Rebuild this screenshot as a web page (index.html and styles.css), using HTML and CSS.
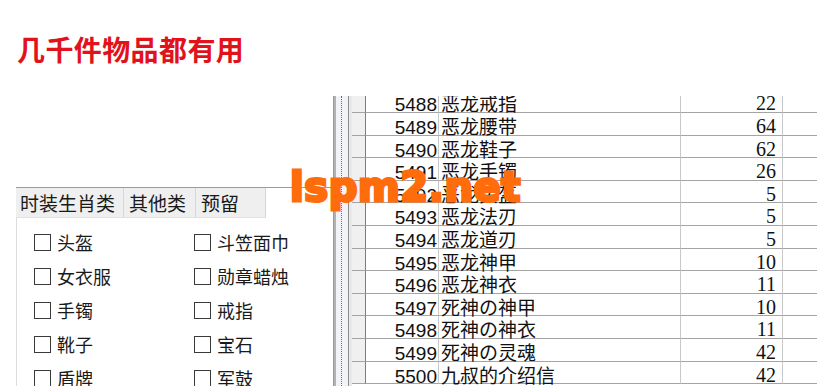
FILE: index.html
```html
<!DOCTYPE html>
<html lang="zh-CN">
<head>
<meta charset="utf-8">
<title>几千件物品都有用</title>
<link rel="stylesheet" href="styles.css">
</head>
<body>
<div class="page">
  <header class="head">
    <h1 class="title">几千件物品都有用</h1>
  </header>
  <div class="main">
    <section class="left">
      <div class="tabstrip">
        <span class="tab t1">时装生肖类</span>
        <span class="tab t2">其他类</span>
        <span class="tab t3">预留</span>
      </div>
      <div class="checks">
        <label class="chk"><span class="box"></span>头盔</label>
        <label class="chk"><span class="box"></span>斗笠面巾</label>
        <label class="chk"><span class="box"></span>女衣服</label>
        <label class="chk"><span class="box"></span>勋章蜡烛</label>
        <label class="chk"><span class="box"></span>手镯</label>
        <label class="chk"><span class="box"></span>戒指</label>
        <label class="chk"><span class="box"></span>靴子</label>
        <label class="chk"><span class="box"></span>宝石</label>
        <label class="chk"><span class="box"></span>盾牌</label>
        <label class="chk"><span class="box"></span>军鼓</label>
      </div>
    </section>
    <div class="splitter">
      <div class="bar"></div>
      <div class="grip"></div>
      <div class="edge"></div>
    </div>
    <div class="grid">
      <div class="rows">
        <div class="row"><span class="rh"></span><span class="id">5488</span><span class="name">恶龙戒指</span><span class="qty">22</span><span class="rest"></span></div>
        <div class="row"><span class="rh"></span><span class="id">5489</span><span class="name">恶龙腰带</span><span class="qty">64</span><span class="rest"></span></div>
        <div class="row"><span class="rh"></span><span class="id">5490</span><span class="name">恶龙鞋子</span><span class="qty">62</span><span class="rest"></span></div>
        <div class="row"><span class="rh"></span><span class="id">5491</span><span class="name">恶龙手镯</span><span class="qty">26</span><span class="rest"></span></div>
        <div class="row"><span class="rh"></span><span class="id">5492</span><span class="name">恶龙头盔</span><span class="qty">5</span><span class="rest"></span></div>
        <div class="row"><span class="rh"></span><span class="id">5493</span><span class="name">恶龙法刃</span><span class="qty">5</span><span class="rest"></span></div>
        <div class="row"><span class="rh"></span><span class="id">5494</span><span class="name">恶龙道刃</span><span class="qty">5</span><span class="rest"></span></div>
        <div class="row"><span class="rh"></span><span class="id">5495</span><span class="name">恶龙神甲</span><span class="qty">10</span><span class="rest"></span></div>
        <div class="row"><span class="rh"></span><span class="id">5496</span><span class="name">恶龙神衣</span><span class="qty">11</span><span class="rest"></span></div>
        <div class="row"><span class="rh"></span><span class="id">5497</span><span class="name">死神の神甲</span><span class="qty">10</span><span class="rest"></span></div>
        <div class="row"><span class="rh"></span><span class="id">5498</span><span class="name">死神の神衣</span><span class="qty">11</span><span class="rest"></span></div>
        <div class="row"><span class="rh"></span><span class="id">5499</span><span class="name">死神の灵魂</span><span class="qty">42</span><span class="rest"></span></div>
        <div class="row"><span class="rh"></span><span class="id">5500</span><span class="name">九叔的介绍信</span><span class="qty">42</span><span class="rest"></span></div>
      </div>
    </div>
  </div>
  <div class="watermark">lspm2.net</div>
</div>
</body>
</html>
```

FILE: styles.css
```css
* { box-sizing: border-box; }
html, body { margin: 0; padding: 0; background: #fff; }
body {
  width: 817px;
  height: 386px;
  overflow: hidden;
  font-family: "Noto Sans CJK SC", "Liberation Sans", sans-serif;
  color: #111;
}
.page { position: relative; width: 817px; height: 386px; }

.head { height: 96px; padding: 35px 0 0 17px; }
.title {
  margin: 0;
  font-size: 28px;
  line-height: 28px;
  font-weight: 700;
  color: #e2121c;
  letter-spacing: 0.4px;
}

.main { display: flex; height: 290px; }

.left { width: 333px; padding: 91px 0 0 16px; }
.tabstrip {
  display: flex;
  height: 31px;
  border-top: 1px solid #9c9c9c;
}
.tab {
  height: 30px;
  line-height: 30px;
  font-size: 19px;
  background: #efefef;
  border-right: 1px solid #d6d6d6;
  border-bottom: 1px solid #e2e2e2;
  color: #1a1a1a;
}
.t1 { width: 108px; padding-left: 4px; }
.t2 { width: 72px; padding-left: 5px; }
.t3 { width: 70px; padding-left: 5px; }

.checks {
  display: grid;
  grid-template-columns: 160px 140px;
  grid-auto-rows: 34px;
  padding: 7px 0 0 17px;
  border-left: 1px solid #dcdcdc;
  height: 170px;
}
.chk {
  display: flex;
  align-items: center;
  gap: 6px;
  font-size: 18px;
  color: #1a1a1a;
}
.box {
  width: 17px;
  height: 17px;
  border: 1px solid #3a3a3a;
  background: #fff;
  flex: none;
}

.splitter { display: flex; height: 290px; }
.bar { width: 3px; background: #b2b2b2; border-left: 1px solid #9a9a9a; }
.grip {
  width: 12px;
  background: #f2f3f6;
  position: relative;
}
.grip::before {
  content: "";
  position: absolute;
  left: 5px;
  top: 0;
  bottom: 0;
  border-left: 1px dotted #6a6a6a;
}
.edge { width: 4px; background: #e9e9e9; border-left: 1px solid #8c8c8c; }

.grid { flex: 1; height: 290px; overflow: hidden; }
.rows { margin-top: -5.6px; }
.row {
  display: flex;
  height: 22.6px;
  line-height: 21px;
}
.row > span { border-bottom: 1px solid #a4a4a4; height: 22.6px; white-space: nowrap; }
.rh {
  width: 14px;
  background: #f0f0f0;
  border-right: 1px solid #7c7c7c;
}
.id {
  width: 73px;
  text-align: right;
  padding: 4px 1px 0 0;
  border-right: 1px solid #c9c9c9;
  font-family: "Liberation Sans", sans-serif;
  font-size: 19px;
}
.name {
  width: 242px;
  padding: 2px 0 0 2px;
  border-right: 1px solid #c9c9c9;
  font-size: 19px;
}
.qty {
  width: 102px;
  text-align: right;
  padding: 3px 6px 0 0;
  border-right: 1px solid #c9c9c9;
  font-family: "Liberation Serif", serif;
  font-size: 20px;
}
.rest { flex: 1; }

.watermark {
  position: absolute;
  left: 290px;
  top: 167px;
  font-family: "DejaVu Sans", sans-serif;
  font-weight: 700;
  font-size: 40px;
  line-height: 40px;
  color: #ff6c0c;
  -webkit-text-stroke: 3px #ff6c0c;
  letter-spacing: 0.6px;
}
```
